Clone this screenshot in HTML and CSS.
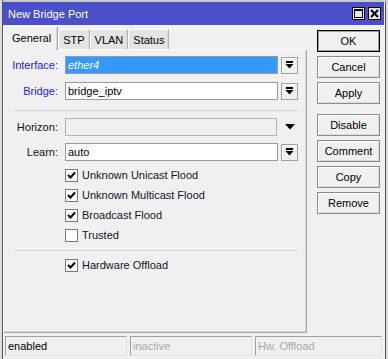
FILE: index.html
```html
<!doctype html>
<html lang="en">
    <head>
        <meta charset="UTF-8" />
        <title>New Bridge Port</title>
        <link rel="stylesheet" href="styles.css">
    </head>
    <body>
        <div class="window">
            <div class="titlebar">
                <span class="title">New Bridge Port</span>
                <div class="title-buttons">
                    <span class="tbtn">
                        <svg width="9" height="9" viewBox="0 0 9 9"><rect x="0.5" y="0.5" width="8" height="8" fill="none" stroke="#000"/><rect x="0" y="0" width="9" height="2" fill="#000"/></svg>
                    </span>
                    <span class="tbtn">
                        <svg width="9" height="9" viewBox="0 0 9 9"><path d="M1 1 L8 8 M8 1 L1 8" stroke="#000" stroke-width="2"/></svg>
                    </span>
                </div>
            </div>

            <div class="content">
                <div class="main">
                    <div class="tabs">
                        <div class="tab active">General</div>
                        <div class="tab">STP</div>
                        <div class="tab">VLAN</div>
                        <div class="tab">Status</div>
                    </div>
                    <div class="panel">
                        <div class="row">
                            <label class="lbl link">Interface:</label>
                            <div class="field selected">ether4</div>
                            <span class="dd"><svg width="9" height="8" viewBox="0 0 9 8"><rect x="1" y="0" width="7" height="2" fill="#000"/><polygon points="0.5,3 8.5,3 4.5,7.5" fill="#000"/></svg></span>
                        </div>
                        <div class="row gap-8">
                            <label class="lbl link">Bridge:</label>
                            <div class="field">bridge_iptv</div>
                            <span class="dd"><svg width="9" height="8" viewBox="0 0 9 8"><rect x="1" y="0" width="7" height="2" fill="#000"/><polygon points="0.5,3 8.5,3 4.5,7.5" fill="#000"/></svg></span>
                        </div>
                        <div class="sep sep-a"></div>
                        <div class="row">
                            <label class="lbl">Horizon:</label>
                            <div class="field disabled"></div>
                            <span class="arrow"><svg width="10" height="6" viewBox="0 0 10 6"><polygon points="0,0 10,0 5,5.5" fill="#000"/></svg></span>
                        </div>
                        <div class="row gap-7">
                            <label class="lbl">Learn:</label>
                            <div class="field">auto</div>
                            <span class="dd"><svg width="9" height="8" viewBox="0 0 9 8"><rect x="1" y="0" width="7" height="2" fill="#000"/><polygon points="0.5,3 8.5,3 4.5,7.5" fill="#000"/></svg></span>
                        </div>
                        <div class="checks flood">
                            <div class="check"><span class="box on"></span>Unknown Unicast Flood</div>
                            <div class="check"><span class="box on"></span>Unknown Multicast Flood</div>
                            <div class="check"><span class="box on"></span>Broadcast Flood</div>
                            <div class="check"><span class="box"></span>Trusted</div>
                        </div>
                        <div class="sep sep-b"></div>
                        <div class="checks">
                            <div class="check"><span class="box on"></span>Hardware Offload</div>
                        </div>
                    </div>
                </div>

                <div class="side">
                    <button class="btn default">OK</button>
                    <button class="btn">Cancel</button>
                    <button class="btn">Apply</button>
                    <button class="btn spaced">Disable</button>
                    <button class="btn">Comment</button>
                    <button class="btn">Copy</button>
                    <button class="btn">Remove</button>
                </div>
            </div>

            <div class="statusbar">
                <div class="cell">enabled</div>
                <div class="cell dim">inactive</div>
                <div class="cell dim wide">Hw. Offload</div>
            </div>
        </div>
    </body>
</html>
```

FILE: styles.css
```css
body {
    margin: 0;
    font-family: "Liberation Sans", Arial, sans-serif;
    font-size: 11px;
    color: #000;
    background: #f0f0f0;
}

.window {
    box-sizing: border-box;
    width: 388px;
    height: 359px;
    padding: 2px 4px 3px 3px;
    display: flex;
    flex-direction: column;
    background: #f0f0f0;
    box-shadow:
        inset 2px 0 0 #dcdcdc,
        inset 3px 0 0 #555,
        inset 0 2px 0 #c8c8c8,
        inset -2px 0 0 #dcdcdc,
        inset -3px 0 0 #555;
}

.titlebar {
    height: 23px;
    flex: none;
    display: flex;
    align-items: center;
    justify-content: space-between;
    background: #4b4fc9;
    color: #fff;
    padding-left: 5px;
    padding-right: 3px;
}

.title {
    font-size: 11px;
}

.title-buttons {
    display: flex;
    gap: 3px;
}

.tbtn {
    box-sizing: border-box;
    width: 13px;
    height: 13px;
    border: 1px solid #000;
    background: #e6e6e6;
    display: flex;
    align-items: center;
    justify-content: center;
}

.content {
    flex: 1;
    display: flex;
    padding-top: 1px;
}

.main {
    width: 304px;
    display: flex;
    flex-direction: column;
}

.tabs {
    display: flex;
    align-items: flex-end;
    height: 24px;
    margin-bottom: -1px;
    position: relative;
    z-index: 1;
}

.tab {
    box-sizing: border-box;
    height: 20px;
    margin-bottom: 1px;
    padding: 0 4px;
    border: 1px solid #b4b4b4;
    border-bottom: none;
    border-left-color: #fff;
    border-top-color: #fff;
    background: #e4e4e4;
    display: flex;
    align-items: center;
    box-shadow: inset -1px 0 0 #dadada;
}

.tab.active {
    height: 24px;
    margin-bottom: 0;
    padding: 0 6px 2px 8px;
    background: #f0f0f0;
    border-color: #fff #a8a8a8 transparent #fff;
}

.panel {
    flex: 1;
    box-sizing: border-box;
    border: 1px solid #a8a8a8;
    border-top-color: #fff;
    border-left-color: #fff;
    box-shadow: inset -1px -1px 0 #d8d8d8;
    padding: 6px 8px 0 4px;
}

.row {
    display: flex;
    align-items: center;
    height: 18px;
}

.gap-8 {
    margin-top: 8px;
}

.gap-7 {
    margin-top: 7px;
}

.lbl {
    width: 50px;
    margin-right: 7px;
    text-align: right;
    color: #111;
}

.lbl.link {
    color: #1c1cf0;
}

.field {
    box-sizing: border-box;
    width: 213px;
    height: 18px;
    border: 1px solid #9a9a9a;
    background: #fff;
    padding-left: 2px;
    line-height: 16px;
}

.field.selected {
    background: #3399ff;
    color: #fff;
    font-style: italic;
}

.field.disabled {
    background: #f0f0f0;
    border-color: #b4b4b4;
}

.dd {
    box-sizing: border-box;
    width: 17px;
    height: 17px;
    margin-left: 3px;
    border: 1px solid #a0a0a0;
    background: #f0f0f0;
    box-shadow: inset 1px 1px 0 #fff;
    display: flex;
    align-items: center;
    justify-content: center;
}

.arrow {
    width: 17px;
    margin-left: 4px;
    display: flex;
    justify-content: center;
}

.sep {
    width: 284px;
    margin-left: 6px;
    border-top: 1px solid #d4d4d4;
}

.sep-a {
    margin-top: 10px;
    margin-bottom: 7px;
}

.sep-b {
    margin-top: 5px;
    margin-bottom: 4px;
}

.checks {
    padding-left: 57px;
}

.checks.flood {
    margin-top: 4px;
}

.check {
    height: 20px;
    display: flex;
    align-items: center;
    color: #14142a;
}

.box {
    box-sizing: border-box;
    width: 13px;
    height: 13px;
    margin-right: 4px;
    border: 1px solid #7a7a7a;
    background: #fff;
}

.box.on {
    background: #fff url("data:image/svg+xml;utf8,<svg xmlns='http://www.w3.org/2000/svg' width='11' height='11'><path d='M2 5 L4.5 7.5 L9 2.5' fill='none' stroke='black' stroke-width='2'/></svg>") center / 11px 11px no-repeat;
}

.side {
    width: 63px;
    margin-left: 10px;
    padding-top: 4px;
    display: flex;
    flex-direction: column;
    gap: 4px;
}

.btn {
    box-sizing: border-box;
    height: 22px;
    padding: 0;
    font-family: inherit;
    font-size: 11px;
    color: #000;
    background: #f0f0f0;
    border: 1px solid #8c8c8c;
    box-shadow: inset 1px 1px 0 #fff, inset -1px -1px 0 #dcdcdc;
}

.btn.default {
    border-color: #000;
    box-shadow: inset 0 0 0 1px #a0a0a0;
}

.btn.spaced {
    margin-top: 6px;
}

.statusbar {
    display: flex;
    gap: 3px;
    height: 20px;
    margin: 3px 0 0 2px;
}

.cell {
    box-sizing: border-box;
    width: 122px;
    padding-left: 2px;
    line-height: 18px;
    border: 1px solid;
    border-color: #a0a0a0 #e2e2e2 #e2e2e2 #a0a0a0;
}

.cell.dim {
    color: #a8a8a8;
}

.cell.wide {
    width: 127px;
}
```
